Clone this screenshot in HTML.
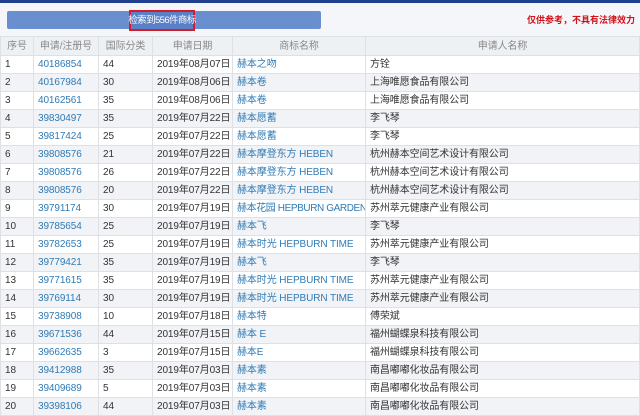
<!DOCTYPE html>
<html><head><meta charset="utf-8"><style>
body{margin:0;width:640px;height:414px;overflow:hidden;background:#f4f6f9;font-family:"Liberation Sans","Noto Sans CJK SC",sans-serif;font-size:10px;color:#333;position:relative}
.top{position:absolute;left:0;top:0;width:640px;height:3px;background:#1f3f8f}
.bar{position:absolute;left:7px;top:11px;width:314px;height:18px;background:#6a8fd0;border-radius:2px}
.hit{position:absolute;left:129px;top:10px;width:62px;height:17px;border:2px solid #d21c2a;background:#5a80c8;color:#fff;font-size:9.5px;line-height:17px;white-space:nowrap;letter-spacing:-0.6px;display:flex;justify-content:center;overflow:visible}
.warn{position:absolute;left:430px;top:12px;color:#d0121b;font-size:9px;font-weight:bold;text-align:right;line-height:16px;width:205px;white-space:nowrap}
table{position:absolute;left:0;top:36px;border-collapse:collapse;width:640px;table-layout:fixed}
td,th{border:1px solid #dde1e6;height:17px;padding:0 0 0 4px;white-space:nowrap;overflow:hidden;font-weight:normal;line-height:17px;letter-spacing:-0.1px}
th{background:#eef1f4;color:#888;text-align:center;height:18px;padding:0}
tr:nth-child(odd) td{background:#f1f3f6}
tr:nth-child(even) td{background:#fff}
a{color:#2f7bb6}
td.c1{color:#2f7bb6}
.n{letter-spacing:-0.4px}
</style></head><body>
<div class="top"></div>
<div class="bar"></div>
<div class="hit"><span>检索到556件商标</span></div>
<div class="warn">仅供参考，不具有法律效力</div>
<table>
<colgroup><col style="width:33px"><col style="width:65px"><col style="width:54px"><col style="width:80px"><col style="width:133px"><col></colgroup>
<tr><th>序号</th><th>申请/注册号</th><th>国际分类</th><th>申请日期</th><th>商标名称</th><th>申请人名称</th></tr>
<tr><td>1</td><td class="c1">40186854</td><td>44</td><td>2019年08月07日</td><td><a>赫本之吻</a></td><td>方铨</td></tr>
<tr><td>2</td><td class="c1">40167984</td><td>30</td><td>2019年08月06日</td><td><a>赫本卷</a></td><td>上海唯愿食品有限公司</td></tr>
<tr><td>3</td><td class="c1">40162561</td><td>35</td><td>2019年08月06日</td><td><a>赫本卷</a></td><td>上海唯愿食品有限公司</td></tr>
<tr><td>4</td><td class="c1">39830497</td><td>35</td><td>2019年07月22日</td><td><a>赫本愿蓄</a></td><td>李飞琴</td></tr>
<tr><td>5</td><td class="c1">39817424</td><td>25</td><td>2019年07月22日</td><td><a>赫本愿蓄</a></td><td>李飞琴</td></tr>
<tr><td>6</td><td class="c1">39808576</td><td>21</td><td>2019年07月22日</td><td><a>赫本摩登东方 HEBEN</a></td><td>杭州赫本空间艺术设计有限公司</td></tr>
<tr><td>7</td><td class="c1">39808576</td><td>26</td><td>2019年07月22日</td><td><a>赫本摩登东方 HEBEN</a></td><td>杭州赫本空间艺术设计有限公司</td></tr>
<tr><td>8</td><td class="c1">39808576</td><td>20</td><td>2019年07月22日</td><td><a>赫本摩登东方 HEBEN</a></td><td>杭州赫本空间艺术设计有限公司</td></tr>
<tr><td>9</td><td class="c1">39791174</td><td>30</td><td>2019年07月19日</td><td class="n"><a>赫本花园 HEPBURN GARDEN</a></td><td>苏州萃元健康产业有限公司</td></tr>
<tr><td>10</td><td class="c1">39785654</td><td>25</td><td>2019年07月19日</td><td><a>赫本飞</a></td><td>李飞琴</td></tr>
<tr><td>11</td><td class="c1">39782653</td><td>25</td><td>2019年07月19日</td><td><a>赫本时光 HEPBURN TIME</a></td><td>苏州萃元健康产业有限公司</td></tr>
<tr><td>12</td><td class="c1">39779421</td><td>35</td><td>2019年07月19日</td><td><a>赫本飞</a></td><td>李飞琴</td></tr>
<tr><td>13</td><td class="c1">39771615</td><td>35</td><td>2019年07月19日</td><td><a>赫本时光 HEPBURN TIME</a></td><td>苏州萃元健康产业有限公司</td></tr>
<tr><td>14</td><td class="c1">39769114</td><td>30</td><td>2019年07月19日</td><td><a>赫本时光 HEPBURN TIME</a></td><td>苏州萃元健康产业有限公司</td></tr>
<tr><td>15</td><td class="c1">39738908</td><td>10</td><td>2019年07月18日</td><td><a>赫本特</a></td><td>傅荣斌</td></tr>
<tr><td>16</td><td class="c1">39671536</td><td>44</td><td>2019年07月15日</td><td><a>赫本 E</a></td><td>福州蝴蝶泉科技有限公司</td></tr>
<tr><td>17</td><td class="c1">39662635</td><td>3</td><td>2019年07月15日</td><td><a>赫本E</a></td><td>福州蝴蝶泉科技有限公司</td></tr>
<tr><td>18</td><td class="c1">39412988</td><td>35</td><td>2019年07月03日</td><td><a>赫本素</a></td><td>南昌嘟嘟化妆品有限公司</td></tr>
<tr><td>19</td><td class="c1">39409689</td><td>5</td><td>2019年07月03日</td><td><a>赫本素</a></td><td>南昌嘟嘟化妆品有限公司</td></tr>
<tr><td>20</td><td class="c1">39398106</td><td>44</td><td>2019年07月03日</td><td><a>赫本素</a></td><td>南昌嘟嘟化妆品有限公司</td></tr>
</table>
</body></html>
